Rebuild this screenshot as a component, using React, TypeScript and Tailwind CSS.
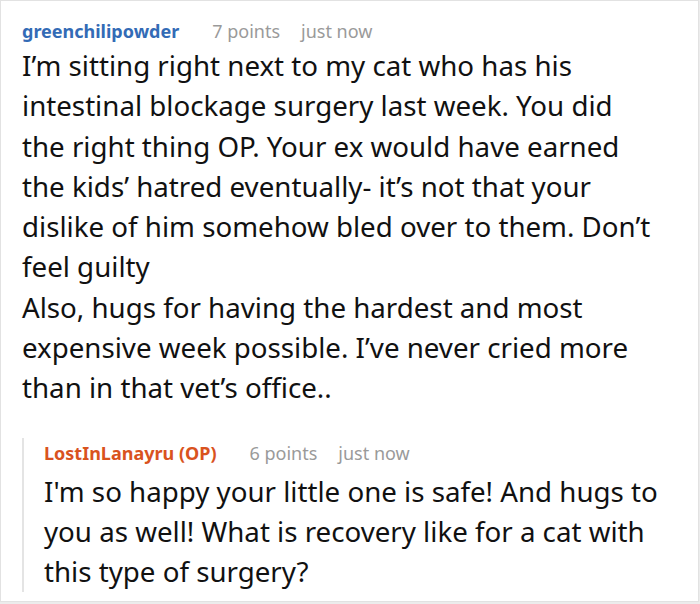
export default function App() {
  return (
    <div className="h-[604px] w-[700px] bg-[#ececec]" style={{ fontFamily: '"Noto Sans", sans-serif' }}>
      <div className="h-[602px] w-[699px] overflow-hidden border border-[#e2e2e2] bg-white pl-[21px] pr-2 pt-[16px]">
        <Comment
          user="greenchilipowder"
          userClass="text-[#336bb6]"
          points="7 points"
          headClass="h-[28px]"
          lines={[
            "I’m sitting right next to my cat who has his",
            "intestinal blockage surgery last week. You did",
            "the right thing OP. Your ex would have earned",
            "the kids’ hatred eventually- it’s not that your",
            "dislike of him somehow bled over to them. Don’t",
            "feel guilty",
            "Also, hugs for having the hardest and most",
            "expensive week possible. I’ve never cried more",
            "than in that vet’s office..",
          ]}
        />
        <div className="mt-[30px] border-l-2 border-[#e4e4e4] pl-5">
          <Comment
            user="LostInLanayru (OP)"
            userClass="text-[#d9531e]"
            points="6 points"
            headClass="h-[33px] pb-[2px]"
            lines={[
              "I'm so happy your little one is safe! And hugs to",
              "you as well! What is recovery like for a cat with",
              "this type of surgery?",
            ]}
          />
        </div>
      </div>
    </div>
  );
}

function Comment({
  user,
  userClass,
  points,
  headClass,
  lines,
}: {
  user: string;
  userClass: string;
  points: string;
  headClass: string;
  lines: string[];
}) {
  return (
    <div>
      <div className={`flex items-center text-[18px] leading-[26px] ${headClass}`}>
        <span className={`mr-[33px] font-bold ${userClass}`}>{user}</span>
        <span className="mr-[21px] text-[#9a9a9a]">{points}</span>
        <span className="text-[#9a9a9a]">just now</span>
      </div>
      <div className="text-[27.7px] leading-[40.3px] text-[#111111]">
        {lines.map((l, i) => (
          <div key={i} className="whitespace-nowrap">
            {l}
          </div>
        ))}
      </div>
    </div>
  );
}
